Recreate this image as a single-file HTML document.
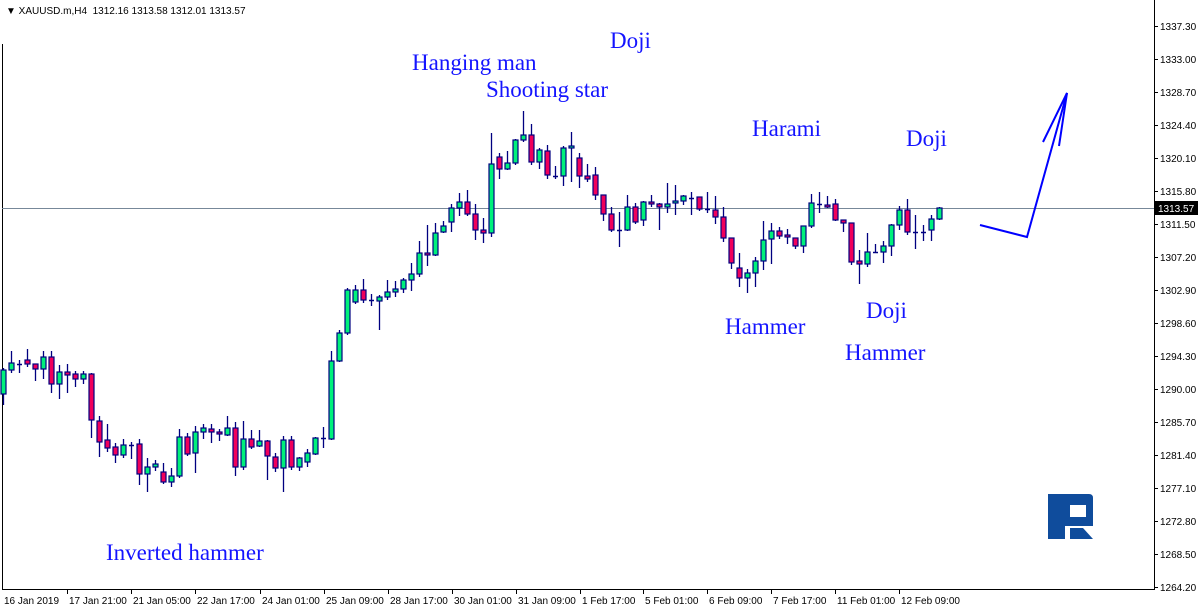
<!DOCTYPE html>
<html><head><meta charset="utf-8">
<style>
html,body{margin:0;padding:0;background:#fff;width:1200px;height:611px;overflow:hidden}
svg{display:block}
.ax{font-family:"Liberation Sans",sans-serif;font-size:10px;fill:#000}
.lb{font-family:"Liberation Serif",serif;font-size:23px;fill:#1414ff}
</style></head><body>
<svg id="s" width="1200" height="611" xmlns="http://www.w3.org/2000/svg">
<rect width="1200" height="611" fill="#fff"/>
<line x1="2.5" y1="44" x2="2.5" y2="589.5" stroke="#000" stroke-width="1"/>
<line x1="2" y1="589.5" x2="1154.5" y2="589.5" stroke="#000" stroke-width="1"/>
<line x1="1154.5" y1="0" x2="1154.5" y2="590" stroke="#000" stroke-width="1"/>
<line x1="2" y1="208.5" x2="1154" y2="208.5" stroke="#778899" stroke-width="1"/>
<g id="c"></g>
<g id="ax"></g>
<text x="6" y="14" class="ax">▼ XAUUSD.m,H4&#160; 1312.16 1313.58 1312.01 1313.57</text>
<rect x="1155" y="201" width="43" height="14" fill="#000"/>
<text x="1158" y="212" class="ax" style="fill:#fff">1313.57</text>
<text x="412" y="70" class="lb">Hanging man</text>
<text x="486" y="97" class="lb">Shooting star</text>
<text x="610" y="48" class="lb">Doji</text>
<text x="752" y="136" class="lb">Harami</text>
<text x="906" y="146" class="lb">Doji</text>
<text x="725" y="334" class="lb">Hammer</text>
<text x="866" y="318" class="lb">Doji</text>
<text x="845" y="360" class="lb">Hammer</text>
<text x="106" y="560" class="lb">Inverted hammer</text>
<polyline points="980,225 1027,237 1067,93" fill="none" stroke="#0000ff" stroke-width="2"/>
<polyline points="1043,142 1067,93 1059,146" fill="none" stroke="#0000ff" stroke-width="2"/>
<g transform="translate(1048,494)" fill="#0f4c9c">
<path d="M0 0 H41 Q45 0 45 4 V32 H0 Z M22 11 V23 H38 V11 Z" fill-rule="evenodd"/>
<rect x="0" y="0" width="17" height="45"/>
<path d="M22 34 H35 L45 45 H22 Z"/>
</g>
</svg>
<script>
var d=[[3,394,370,368,405],[11,370,363,351,373],[19,364,364,360,373],[27,360,364,349,367],[35,364,369,364,381],[43,369,357,351,379],[51,357,384,351,393],[59,384,372,365,399],[67,372,375,364,393],[75,374,379,371,387],[83,379,374,371,384],[91,374,420,373,438],[99,421,442,416,457],[107,440,448,424,452],[115,447,455,443,463],[123,455,445,439,458],[131,445,445,442,459],[139,444,474,439,485],[147,474,467,458,492],[155,467,464,460,471],[163,472,482,463,484],[171,482,476,468,487],[179,476,437,429,478],[187,437,454,433,456],[195,453,432,426,473],[203,432,428,424,439],[211,429,432,424,443],[219,432,434,429,441],[227,435,428,416,436],[235,428,467,422,476],[243,467,439,421,470],[251,439,447,430,449],[259,446,441,430,447],[267,441,456,440,480],[275,457,468,453,472],[283,468,440,436,492],[291,440,467,436,470],[299,467,458,457,471],[307,462,453,449,467],[315,454,438,437,455],[323,438,438,427,448],[331,439,361,351,440],[339,361,333,330,362],
[347,333,290,288,335],[355,302,290,285,304],[363,290,300,279,303],[371,300,300,294,306],[379,301,297,295,330],[387,297,292,280,300],[395,292,289,281,297],[403,289,280,278,293],[411,280,274,263,291],[419,274,253,241,277],[427,253,255,225,266],[435,255,233,223,256],[443,232,226,221,233],[451,222,208,204,232],[459,208,202,193,216],[467,202,214,190,216],[475,214,230,204,240],[483,230,233,218,243],[491,233,164,133,237],[499,157,169,153,179],[507,169,163,151,170],[515,163,140,139,165],[523,140,135,111,142],[531,135,162,124,165],[539,162,150,148,169],[547,151,175,145,179],[555,176,176,166,179],[563,176,148,146,186],[571,148,146,132,182],[579,158,176,153,188],[587,176,179,164,182],[595,175,195,167,200],[603,195,214,195,221],[611,214,230,207,232],[619,230,230,212,247],[627,230,207,195,231],[635,207,222,203,224],[643,220,202,201,226],[651,202,204,195,207],[659,204,207,203,230],[667,207,204,183,213],[675,203,201,185,215],[683,201,196,195,205],[691,198,198,192,215],[699,197,209,197,211],[707,209,209,192,213],[715,210,217,196,224],[723,217,238,207,242],[731,238,263,238,269],[739,268,278,253,287],[747,278,273,269,293],[755,273,261,257,287],[763,261,240,221,270],[771,239,231,223,264],[779,231,236,227,239],[787,235,237,229,244],[795,238,246,238,249],[803,246,226,226,253],[811,226,203,194,228],[819,204,204,192,213],[827,205,207,196,208],[835,204,220,199,221],[843,220,223,220,232],[851,223,262,223,265],[859,261,264,250,284],[867,264,252,233,267],[875,252,252,244,253],[883,252,246,241,263],[891,246,225,224,256],[899,225,210,206,230],[907,210,232,199,235],[915,232,232,215,249],[923,232,232,225,241],[931,230,219,215,241],[939,219,208,207,220]];
var g=document.getElementById("c"),h="";
d.forEach(function(c){var x=c[0],o=c[1],cl=c[2],hi=c[3],lo=c[4];
h+='<line x1="'+(x+0.5)+'" y1="'+hi+'" x2="'+(x+0.5)+'" y2="'+lo+'" stroke="#000080" stroke-width="1.3"/>';
if(o==cl){h+='<line x1="'+(x-2)+'" y1="'+(o+0.5)+'" x2="'+(x+3)+'" y2="'+(o+0.5)+'" stroke="#000080" stroke-width="1.5"/>';}
else{var t=Math.min(o,cl),b=Math.max(o,cl);var col=cl<o?"#00f07a":"#f0005a";
h+='<rect x="'+(x-2)+'" y="'+t+'" width="5" height="'+Math.max(b-t,2)+'" fill="'+col+'" stroke="#000080" stroke-width="1.2"/>';}});
g.innerHTML=h;
var a="",p=1337.30;
for(var i=0;i<18;i++){var v=p-4.3*i,y=191+(1315.8-v)*7.674;
if(Math.abs(y-208)>8){a+='<line x1="1154" y1="'+(Math.round(y)+0.5)+'" x2="1158" y2="'+(Math.round(y)+0.5)+'" stroke="#000"/>';
a+='<text x="1160" y="'+(Math.round(y)+4)+'" class="ax">'+v.toFixed(2)+'</text>';}}
var t=[[3,"16 Jan 2019"],[67,"17 Jan 21:00"],[131,"21 Jan 05:00"],[195,"22 Jan 17:00"],[260,"24 Jan 01:00"],[324,"25 Jan 09:00"],[388,"28 Jan 17:00"],[452,"30 Jan 01:00"],[516,"31 Jan 09:00"],[580,"1 Feb 17:00"],[643,"5 Feb 01:00"],[707,"6 Feb 09:00"],[771,"7 Feb 17:00"],[835,"11 Feb 01:00"],[899,"12 Feb 09:00"]];
t.forEach(function(q){if(q[0]>3)a+='<line x1="'+(q[0]+0.5)+'" y1="589" x2="'+(q[0]+0.5)+'" y2="594" stroke="#000"/>';
a+='<text x="'+(q[0]+(q[0]>3?2:1))+'" y="604" class="ax">'+q[1]+'</text>';});
document.getElementById("ax").innerHTML=a;
</script>
</body></html>
